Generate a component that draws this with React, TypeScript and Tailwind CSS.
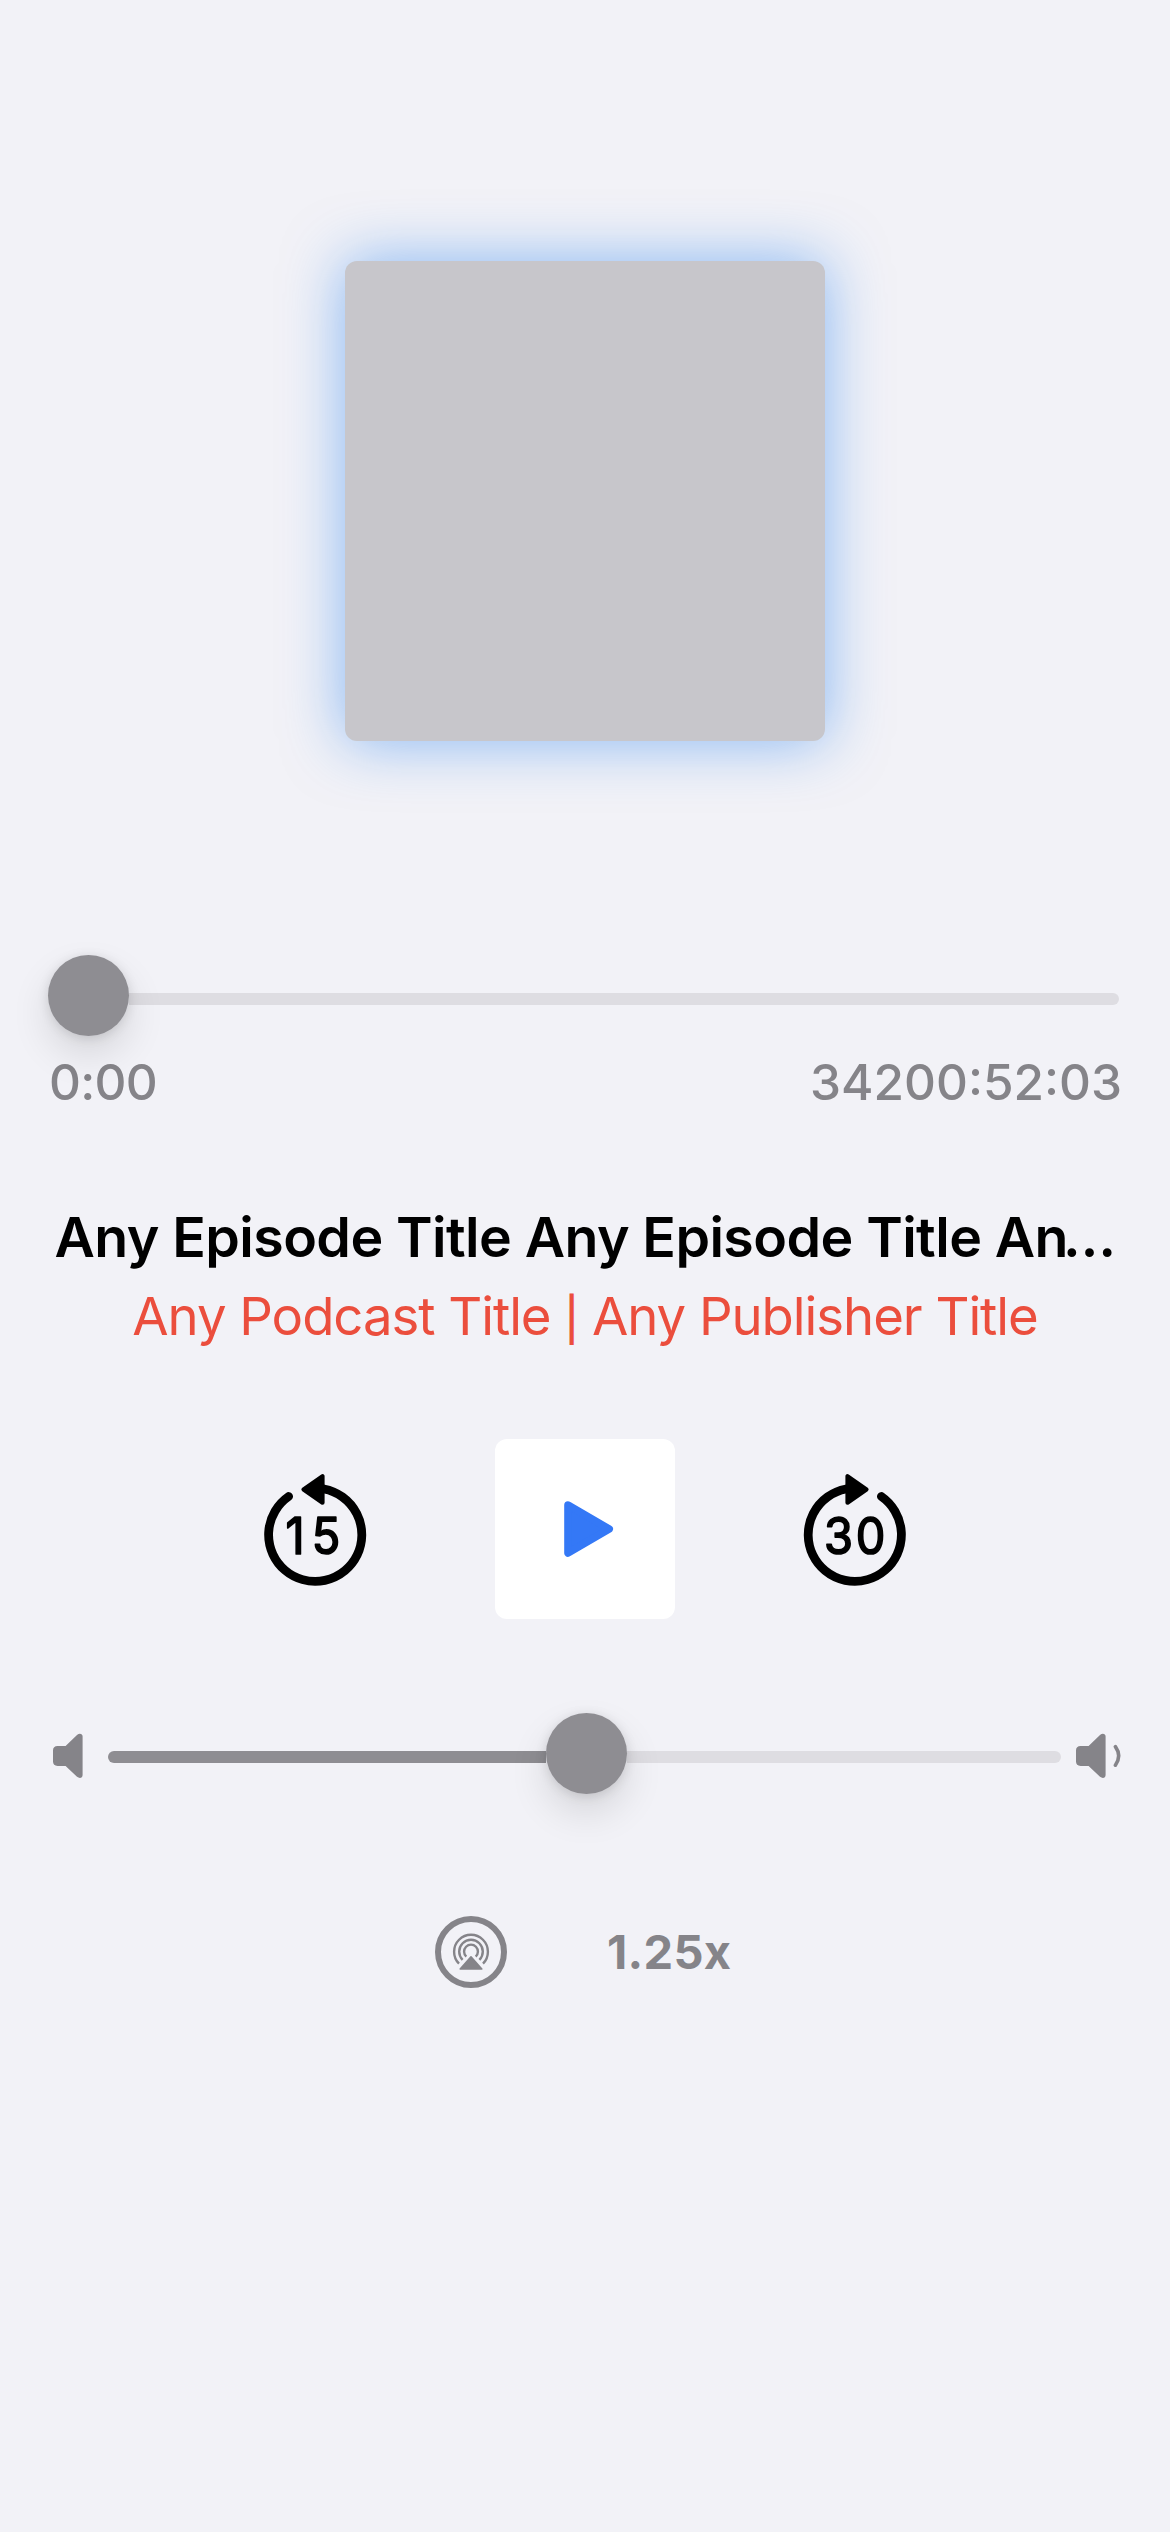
import type { ReactNode } from "react";

function Knob() {
  return (
    <div className="relative z-10 h-[81px] w-[81px] rounded-full bg-[#8e8d92] shadow-[0_18px_39px_rgba(0,0,0,0.12),0_2px_12px_rgba(0,0,0,0.12)]" />
  );
}

function SkipIcon({ label, back }: { label: string; back?: boolean }) {
  return (
    <svg width="104" height="114" viewBox="0 0 104 114">
      <g transform={back ? undefined : "translate(104 0) scale(-1 1)"}>
        <path
          d="M 25.6 24.5 A 46.6 46.6 0 1 0 61 17"
          fill="none"
          stroke="#000"
          strokeWidth="8.8"
          strokeLinecap="round"
        />
        <path
          d="M 40.5 17.5 L 59.5 4.3 V 30.7 Z"
          fill="#000"
          stroke="#000"
          strokeWidth="4.2"
          strokeLinejoin="round"
        />
      </g>
      <text
        transform={back ? "translate(22.6 82) scale(.93 1)" : "translate(20.9 82) scale(.93 1)"}
        textLength={back ? 58.8 : 66}
        lengthAdjust="spacing"
        stroke="#000"
        strokeWidth="1.7"
        strokeLinejoin="round"
        className="text-[50.5px]"
      >
        {label}
      </text>
    </svg>
  );
}

function Speaker({ wave }: { wave?: boolean }) {
  return (
    <svg width={wave ? 46 : 30} height="46" viewBox={wave ? "0 0 46 46" : "0 0 30 46"} fill="#858489">
      <path d="M 4.6 13 H 12.6 L 24 2 C 26.6 -0.2 29.6 0.8 29.6 3.6 V 42 C 29.6 45 26.6 45.9 24 43.8 L 12.6 33 H 4.6 C 1.6 33 0 31.2 0 28.6 V 17.4 C 0 14.6 1.6 13 4.6 13 Z" />
      {wave && (
        <path
          d="M 39.4 13.6 Q 46 22.8 39.4 32.2"
          fill="none"
          stroke="#858489"
          strokeWidth="3.6"
          strokeLinecap="round"
        />
      )}
    </svg>
  );
}

function AirPlay() {
  return (
    <svg width="72" height="72" viewBox="0 0 72 72" fill="none" stroke="#858489">
      <circle cx="36" cy="36" r="33" strokeWidth="6" />
      <g strokeWidth="2.4">
        <path d="M 24 47.6 A 16.9 16.9 0 1 1 48 47.6" />
        <path d="M 27.6 43.9 A 11.8 11.8 0 1 1 44.4 43.9" />
        <path d="M 31.3 40.6 A 6.9 6.9 0 1 1 40.7 40.6" />
      </g>
      <path
        d="M 36 40.9 L 46.8 53 H 25.2 Z"
        fill="#858489"
        strokeWidth="1.6"
        strokeLinejoin="round"
      />
    </svg>
  );
}

function Row({ className, children }: { className: string; children: ReactNode }) {
  return <div className={`flex items-center ${className}`}>{children}</div>;
}

export default function App() {
  return (
    <main className="flex h-[2532px] w-[1170px] flex-col overflow-hidden bg-[#f2f2f7] px-12 pt-[261px] font-['Inter',sans-serif] text-[#858489]">
      <div className="h-[480px] w-[480px] shrink-0 self-center rounded-xl bg-[#c7c6cb] shadow-[0_0_60px_rgba(26,122,240,0.5)]" />

      <Row className="mt-[214px] h-[81px]">
        <Knob />
        <div className="mt-[7px] mr-[3px] h-3 flex-1 rounded-r-full bg-[#dedde2]" />
      </Row>
      <Row className="mt-4 h-[60px] justify-between text-[49.5px] leading-[60px] font-medium">
        <span className="ml-[1px] tracking-[-0.7px]">0:00</span>
        <span>34200:52:03</span>
      </Row>

      <h1 className="mt-[92px] text-center text-[55.5px] leading-[66px] font-semibold tracking-[-0.59px] whitespace-nowrap text-black">
        Any Episode Title Any Episode Title An<span className="-ml-[5px]">…</span>
      </h1>
      <p className="mt-4 text-center text-[52.7px] leading-[60px] tracking-[-1.04px] whitespace-nowrap text-[#eb4e3d]">
        Any Podcast Title <span className="text-[43px] leading-none font-medium">|</span> Any Publisher Title
      </p>

      <Row className="mt-[93px] h-[180px] justify-center gap-[128px]">
        <button aria-label="Back 15 seconds">
          <SkipIcon label="15" back />
        </button>
        <button
          aria-label="Play"
          className="flex h-[180px] w-[180px] items-center justify-center rounded-xl bg-white"
        >
          <svg width="50" height="56" viewBox="0 0 50 56" className="ml-[7px]">
            <path
              d="M 4 4 L 45.2 28 L 4 52 Z"
              fill="#3478f6"
              stroke="#3478f6"
              strokeWidth="7.6"
              strokeLinejoin="round"
            />
          </svg>
        </button>
        <button aria-label="Forward 30 seconds">
          <SkipIcon label="30" />
        </button>
      </Row>

      <Row className="mt-[94px] h-[81px] pl-[5px]">
        <div className="pt-[5px]">
          <Speaker />
        </div>
        <Row className="ml-[25px] w-[954px]">
          <div className="mt-[7px] h-3 w-[438px] rounded-l-full bg-[#8e8d92]" />
          <Knob />
          <div className="mt-[7px] h-3 flex-1 rounded-r-full bg-[#dedde2]" />
        </Row>
        <div className="ml-[15px] pt-[5px]">
          <Speaker wave />
        </div>
      </Row>

      <Row className="mt-[122px] h-[72px] pl-[387px]">
        <AirPlay />
        <span className="ml-[100px] text-[47px] leading-[60px] font-bold tracking-[0.3px]">1.25x</span>
      </Row>
    </main>
  );
}
